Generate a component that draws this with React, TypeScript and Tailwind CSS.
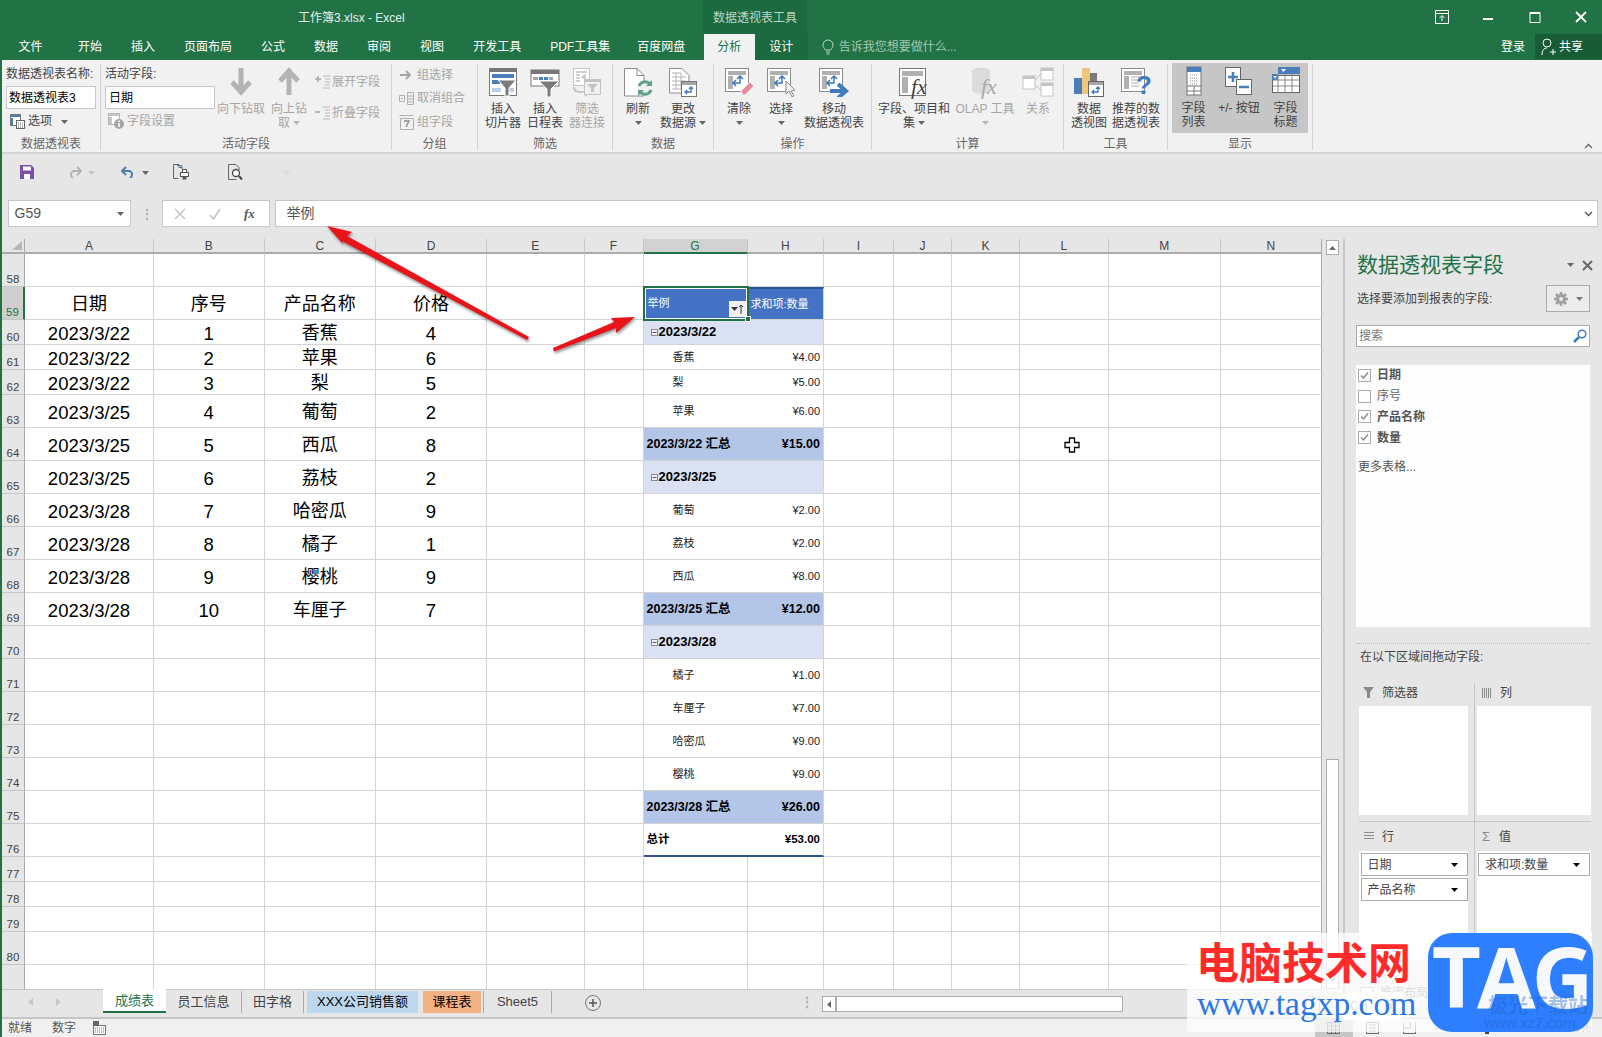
import React from "react";

const Caret = ({ c = "#666" }: { c?: string }) => (
  <svg width="7" height="4" viewBox="0 0 7 4" className="inline-block align-middle">
    <path d="M0 0h7L3.500 4z" fill={c} />
  </svg>
);

const Frame = ({ children, w = 30, h = 30 }: { children: React.ReactNode; w?: number; h?: number }) => (
  <svg width={w} height={h} viewBox={`0 0 ${w} ${h}`} className="block mx-auto">
    {children}
  </svg>
);

const DownIcon = () => (
  <Frame w={24} h={29}>
    <path d="M12 1v24M3 15l9 10 9-10" stroke="#b3b3b3" strokeWidth="5" fill="none" />
  </Frame>
);
const UpIcon = () => (
  <Frame w={24} h={29}>
    <path d="M12 28V4M3 14l9-10 9 10" stroke="#b3b3b3" strokeWidth="5" fill="none" />
  </Frame>
);
const ExpandIcon = ({ minus }: { minus?: boolean }) => (
  <svg width="16" height="14" viewBox="0 0 16 14">
    <path d={minus ? "M0 6h5" : "M0 4h6M3 1v6"} stroke="#a6a6a6" strokeWidth="1.500" />
    <path d="M8 1h7M10 4h5M10 7h5M10 10h5M8 13h7" stroke="#b8b8b8" strokeWidth="1" />
  </svg>
);

const SlicerIcon = () => (
  <Frame w={30} h={30}>
    <rect x="1.500" y="1.500" width="27" height="27" fill="#fff" stroke="#777" />
    <rect x="1" y="1" width="28" height="4" fill="#777" />
    <rect x="4" y="7" width="22" height="4" fill="#4a7eb8" />
    <rect x="4" y="13" width="8" height="4" fill="#4a7eb8" />
    <rect x="4" y="21" width="9" height="4" fill="#bcd0e8" />
    <rect x="20" y="21" width="6" height="4" fill="#bcd0e8" />
    <path d="M10 13h18l-7 8v8h-4v-8z" fill="#7b7b7b" stroke="#fff" strokeWidth="1" />
  </Frame>
);
const TimelineIcon = () => (
  <Frame w={30} h={30}>
    <rect x="1" y="3" width="28" height="16" fill="#fff" stroke="#777" />
    <rect x="1" y="3" width="28" height="4" fill="#777" />
    <rect x="3" y="10" width="5" height="3" fill="#a6a6a6" />
    <rect x="9" y="10" width="4" height="3" fill="#4a7eb8" />
    <rect x="14" y="10" width="4" height="3" fill="#4a7eb8" />
    <rect x="19" y="10" width="4" height="3" fill="#a6a6a6" />
    <path d="M9 14h20l-8 8v8h-4v-8z" fill="#7b7b7b" stroke="#fff" strokeWidth="1" />
  </Frame>
);
const ConnectIcon = () => (
  <Frame w={30} h={30}>
    <rect x="1.500" y="1.500" width="16" height="17" fill="#fff" stroke="#c4c4c4" />
    <path d="M4 5h11M4 8h4M4 11h4M4 14h4" stroke="#cfcfcf" strokeWidth="2" />
    <path d="M10 10l3-2v4zM10 25h6M13 21l4 4-4 4" stroke="#c4c4c4" strokeWidth="1.500" fill="none" />
    <path d="M2 20c0 5 4 5 8 5" stroke="#c4c4c4" strokeWidth="2" fill="none" />
    <rect x="12.500" y="12.500" width="16" height="15" fill="#f1f1f1" stroke="#c4c4c4" />
    <rect x="12" y="12" width="17" height="3" fill="#c4c4c4" />
    <path d="M15 17h11l-4 4v4h-3v-4z" fill="#c4c4c4" />
  </Frame>
);
const RefreshIcon = () => (
  <Frame w={30} h={30}>
    <path d="M1.500 1.500H14l7 7V29H1.500z" fill="#fff" stroke="#8a8a8a" />
    <path d="M14 1.500V8.500H21" fill="none" stroke="#8a8a8a" />
    <circle cx="22" cy="21" r="7.500" fill="#f1f1f1" />
    <path d="M16 19a6.500 6.500 0 0 1 11-2M28 23a6.500 6.500 0 0 1-11 2" stroke="#5fa08a" strokeWidth="3" fill="none" />
    <path d="M29 13v6h-6zM15 29v-6h6z" fill="#5fa08a" />
  </Frame>
);
const ChangeIcon = () => (
  <Frame w={30} h={30}>
    <path d="M1.500 1.500H14l7 7V26H1.500z" fill="#fff" stroke="#8a8a8a" />
    <path d="M4 6h9M4 10h14M4 14h14M4 18h14M4 22h14M8 6v17M13 6v17" stroke="#b5b5b5" strokeWidth="1" />
    <rect x="13.500" y="14.500" width="15" height="15" fill="#fff" stroke="#777" />
    <rect x="14" y="15" width="14" height="3" fill="#a6a6a6" />
    <path d="M23 20v5h-5M19 23l-2 2 2 2M21 22l2-2 2 2" stroke="#3b78bd" strokeWidth="1.300" fill="none" />
  </Frame>
);
const PivotBase = () => (
  <>
    <rect x="1.500" y="1.500" width="23" height="23" fill="#fff" stroke="#8a8a8a" />
    <rect x="4" y="4" width="18" height="4" fill="#b0b0b0" />
    <rect x="4" y="9" width="5" height="13" fill="#b0b0b0" />
    <path d="M16 10v6h-6M12 13l-3 3 3 3M13 12l3-3 3 3" stroke="#3b78bd" strokeWidth="1.500" fill="none" />
  </>
);
const ClearIcon = () => (
  <Frame w={30} h={30}>
    <PivotBase />
    <path d="M17 24l9-9 4 4-9 9h-2z" fill="#e98a9c" stroke="#f1f1f1" />
  </Frame>
);
const SelectIcon = () => (
  <Frame w={30} h={30}>
    <PivotBase />
    <path d="M20 14l0 13 3-3 3 6 2-1-3-5 4-1z" fill="#f1f1f1" stroke="#8a8a8a" />
  </Frame>
);
const MoveIcon = () => (
  <Frame w={32} h={30}>
    <PivotBase />
    <path d="M12 24h12M20 17l8 7-8 7" stroke="#3f7cbf" strokeWidth="4" fill="none" />
  </Frame>
);
const FxIcon = () => (
  <Frame w={32} h={32}>
    <rect x="1.500" y="1.500" width="26" height="27" fill="#fff" stroke="#777" />
    <rect x="4" y="4" width="21" height="5" fill="#b0b0b0" />
    <rect x="4" y="10" width="6" height="16" fill="#b0b0b0" />
    <text x="13" y="27" fontFamily="'Liberation Serif',serif" fontStyle="italic" fontSize="22" fill="#444">fx</text>
  </Frame>
);
const OlapIcon = () => (
  <Frame w={32} h={32}>
    <ellipse cx="12" cy="5" rx="9" ry="3.500" fill="#dcdcdc" stroke="#cfcfcf" />
    <path d="M3 5v18c0 5 18 5 18 0V5z" fill="#dcdcdc" />
    <text x="12" y="27" fontFamily="'Liberation Serif',serif" fontStyle="italic" fontSize="22" fill="#a8a8a8">fx</text>
  </Frame>
);
const RelIcon = () => (
  <Frame w={32} h={30}>
    <rect x="1" y="9" width="12" height="13" fill="#fff" stroke="#c4c4c4" />
    <rect x="19" y="1" width="12" height="12" fill="#fff" stroke="#c4c4c4" />
    <rect x="19" y="16" width="12" height="13" fill="#fff" stroke="#c4c4c4" />
    <path d="M1 9h12v3H1zM19 1h12v3H19zM19 16h12v3H19z" fill="#c4c4c4" />
    <path d="M13 13l6-6M13 18l6 5" stroke="#c4c4c4" />
  </Frame>
);
const ChartIcon = () => (
  <Frame w={32} h={32}>
    <rect x="1" y="11" width="9" height="16" fill="#4a7eb8" />
    <rect x="9" y="1" width="8" height="26" fill="#eec77c" />
    <rect x="17" y="6" width="7" height="8" fill="#7a7a7a" />
    <rect x="15.500" y="14.500" width="15" height="15" fill="#fff" stroke="#666" />
    <rect x="16" y="15" width="14" height="3" fill="#a6a6a6" />
    <path d="M25 20v5h-5M21 23l-2 2 2 2M23 22l2-2 2 2" stroke="#3b78bd" strokeWidth="1.300" fill="none" />
  </Frame>
);
const RecommendIcon = () => (
  <Frame w={32} h={32}>
    <rect x="1.500" y="1.500" width="23" height="23" fill="#fff" stroke="#8a8a8a" />
    <rect x="4" y="4" width="18" height="4" fill="#b0b0b0" />
    <rect x="4" y="9" width="5" height="13" fill="#b0b0b0" />
    <path d="M11 10h10M11 13h10M11 16h8M11 19h8" stroke="#b0b0b0" />
    <text x="16" y="27" fontFamily="'Liberation Sans',sans-serif" fontWeight="700" fontSize="26" fill="#3f7cbf">?</text>
  </Frame>
);
const FieldListIcon = () => (
  <Frame w={16} h={30}>
    <rect x="1" y="1" width="14" height="28" fill="#fff" stroke="#777" />
    <rect x="1" y="1" width="14" height="5" fill="#4a7eb8" />
    <path d="M4 9h8M4 12h8M4 15h8M4 18h8" stroke="#888" strokeDasharray="1 1" />
    <path d="M1 20h14M1 25h14M8 20v9" stroke="#777" />
  </Frame>
);
const PlusMinusIcon = () => (
  <Frame w={30} h={30}>
    <rect x="1.500" y="1.500" width="15" height="19" fill="#fff" stroke="#666" />
    <path d="M4 11h10M9 6v10" stroke="#4a7eb8" strokeWidth="2.500" />
    <rect x="12.500" y="13.500" width="15" height="15" fill="#fff" stroke="#666" />
    <path d="M15 21h10" stroke="#4a7eb8" strokeWidth="2.500" />
  </Frame>
);
const HeadersIcon = () => (
  <Frame w={30} h={28}>
    <rect x="1.500" y="9.500" width="27" height="17" fill="#fff" stroke="#666" />
    <rect x="7" y="1" width="22" height="7" fill="#4a7eb8" />
    <rect x="1" y="8" width="6" height="6" fill="#4a7eb8" />
    <path d="M2 14h26M2 20h26M7 8v19M14 8v19M21 8v19" stroke="#888" />
    <path d="M10 3h5l-2.500 3zM2 10h4l-2 2.500z" fill="#fff" />
  </Frame>
);

const Btn = ({
  w,
  icon,
  lines,
  caret,
  dis,
}: {
  w: string;
  icon: React.ReactNode;
  lines: string[];
  caret?: boolean;
  dis?: boolean;
}) => (
  <div className={`${w} flex flex-col items-center shrink-0 ${dis ? "text-[#a6a6a6]" : "text-[#444]"}`}>
    <div className="h-[37px] pt-[2px] flex items-start justify-center">{icon}</div>
    {lines.map((l, i) => (
      <div key={i} className="h-[14px] leading-[14px] whitespace-nowrap text-[12px] flex items-center gap-[3px]">
        {l && <span>{l}</span>}
        {caret && i === lines.length - 1 && <Caret c={dis ? "#b5b5b5" : "#666"} />}
      </div>
    ))}
  </div>
);

const Group = ({ w, label, children, cls = "" }: { w: string; label: string; children: React.ReactNode; cls?: string }) => (
  <div className={`${w} h-[86px] mt-[4px] border-r border-[#d2d2d2] flex flex-col shrink-0`}>
    <div className={`h-[72px] mt-[1px] flex ${cls}`}>{children}</div>
    <div className="h-[13px] leading-[15px] text-[12px] text-[#666] text-center">{label}</div>
  </div>
);

const colNames = ["A", "B", "C", "D", "E", "F", "G", "H", "I", "J", "K", "L", "M", "N"];
const rowNums = Array.from({ length: 24 }, (_, i) => 58 + i);

const table: Record<number, string[]> = {
  59: ["日期", "序号", "产品名称", "价格"],
  60: ["2023/3/22", "1", "香蕉", "4"],
  61: ["2023/3/22", "2", "苹果", "6"],
  62: ["2023/3/22", "3", "梨", "5"],
  63: ["2023/3/25", "4", "葡萄", "2"],
  64: ["2023/3/25", "5", "西瓜", "8"],
  65: ["2023/3/25", "6", "荔枝", "2"],
  66: ["2023/3/28", "7", "哈密瓜", "9"],
  67: ["2023/3/28", "8", "橘子", "1"],
  68: ["2023/3/28", "9", "樱桃", "9"],
  69: ["2023/3/28", "10", "车厘子", "7"],
};

type P = { t: "date" | "item" | "sub" | "total"; a: string; b?: string };
const pivot: Record<number, P> = {
  60: { t: "date", a: "2023/3/22" },
  61: { t: "item", a: "香蕉", b: "¥4.00" },
  62: { t: "item", a: "梨", b: "¥5.00" },
  63: { t: "item", a: "苹果", b: "¥6.00" },
  64: { t: "sub", a: "2023/3/22 汇总", b: "¥15.00" },
  65: { t: "date", a: "2023/3/25" },
  66: { t: "item", a: "葡萄", b: "¥2.00" },
  67: { t: "item", a: "荔枝", b: "¥2.00" },
  68: { t: "item", a: "西瓜", b: "¥8.00" },
  69: { t: "sub", a: "2023/3/25 汇总", b: "¥12.00" },
  70: { t: "date", a: "2023/3/28" },
  71: { t: "item", a: "橘子", b: "¥1.00" },
  72: { t: "item", a: "车厘子", b: "¥7.00" },
  73: { t: "item", a: "哈密瓜", b: "¥9.00" },
  74: { t: "item", a: "樱桃", b: "¥9.00" },
  75: { t: "sub", a: "2023/3/28 汇总", b: "¥26.00" },
  76: { t: "total", a: "总计", b: "¥53.00" },
};

const CELL = "border-r border-b border-[#d4d4d4]";

function PivotCell({ r, c }: { r: number; c: number }) {
  if (r === 59) {
    if (c === 6)
      return (
        <div className="relative bg-[#4472c4] border-b border-[#d4d4d4] flex items-center pl-[4px] text-[11px] text-white">
          举例
          <div className="absolute left-[-1px] top-[-1px] right-[-1px] bottom-[-1.500px] border-[2px] border-[#217346] outline outline-1 -outline-offset-3 outline-white" />
          <div className="absolute right-[2px] bottom-[2px] w-[17px] h-[16px] bg-[#f0f0f0] flex items-center justify-center gap-[1px]">
            <Caret c="#333" />
            <svg width="4" height="10" viewBox="0 0 4 10">
              <path d="M2 10V1M0 3l2-2 2 2" stroke="#333" fill="none" />
            </svg>
          </div>
          <div className="absolute right-[-3px] bottom-[-3px] w-[6px] h-[6px] bg-[#217346] border border-white z-10" />
        </div>
      );
    return (
      <div className={`${CELL} bg-[#4472c4] border-t-2 border-t-[#2f5597] flex items-center pl-[3px] text-[11px] text-white whitespace-nowrap`}>
        求和项:数量
      </div>
    );
  }
  const p = pivot[r];
  const isG = c === 6;
  if (p.t === "date")
    return (
      <div className={`bg-[#d9e1f2] border-b border-[#d4d4d4] flex items-center ${isG ? "pl-[7px]" : "border-r"} font-bold text-[13px] text-black`}>
        {isG && (
          <>
            <svg width="7" height="7" viewBox="0 0 7 7" className="mr-[1px] shrink-0">
              <rect x=".500" y=".500" width="6" height="6" fill="#eef1f8" stroke="#8a8a8a" />
              <path d="M1.500 3.500h4" stroke="#555" />
            </svg>
            {p.a}
          </>
        )}
      </div>
    );
  if (p.t === "sub")
    return (
      <div className={`bg-[#b4c6e7] border-b border-[#d4d4d4] flex items-center ${isG ? "pl-[3px]" : "border-r justify-end pr-[3px]"} font-bold text-[12.500px] text-black whitespace-nowrap`}>
        {isG ? p.a : p.b}
      </div>
    );
  if (p.t === "total")
    return (
      <div className={`bg-white border-b-2 border-b-[#2f5597] flex items-center ${isG ? "pl-[3px]" : "border-r border-r-[#d4d4d4] justify-end pr-[3px]"} font-bold text-[11.500px] text-black`}>
        {isG ? p.a : p.b}
      </div>
    );
  return (
    <div className={`bg-white border-b border-[#d4d4d4] flex items-center ${isG ? "pl-[29px]" : "border-r justify-end pr-[3px]"} text-[11px] text-[#222]`}>
      {isG ? p.a : p.b}
    </div>
  );
}

function Sheet() {
  return (
    <div className="w-[1319.500px] h-[750px] bg-white grid grid-cols-[23px_129px_110.500px_111.500px_111px_97.500px_59px_104px_76.500px_70px_58px_68px_88.500px_112.500px_100.500px] grid-rows-[15px_33px_33px_25px_25px_25px_repeat(14,33px)_25px_25px_25px_33px_37px] overflow-hidden">
      <div className="bg-[#e6e6e6] border-r border-b-2 border-[#ababab] relative">
        <svg width="10" height="9" viewBox="0 0 10 9" className="absolute right-[2px] bottom-[2px]">
          <path d="M10 0v9H0z" fill="#b5b5b5" />
        </svg>
      </div>
      {colNames.map((n, i) => (
        <div
          key={n}
          className={`border-r border-[#c6c6c6] flex items-center justify-center text-[12px] ${
            n === "G" ? "bg-[#d2d2d2] text-[#217346] border-b-2 border-b-[#217346]" : "bg-[#e6e6e6] text-[#444] border-b-2 border-b-[#ababab]"
          } ${i === 13 ? "border-r-[#ababab]" : ""}`}
        >
          {n}
        </div>
      ))}
      {rowNums.map((r) => (
        <React.Fragment key={r}>
          <div
            className={`border-b border-[#c6c6c6] flex items-end justify-center text-[11.500px] leading-[14px] ${
              r === 59 ? "bg-[#cfcfcf] text-[#217346] border-r-2 border-r-[#217346]" : "bg-[#e6e6e6] text-[#444] border-r border-r-[#ababab]"
            }`}
          >
            {r}
          </div>
          {colNames.map((_, c) => {
            if ((c === 6 || c === 7) && (r === 59 || pivot[r])) return <PivotCell key={c} r={r} c={c} />;
            const v = c < 4 && table[r] ? table[r][c] : "";
            const isNum = /^[0-9]/.test(v);
            return (
              <div
                key={c}
                className={`${CELL} ${c === 13 ? "border-r-[#ababab]" : ""} flex items-center justify-center pt-[3px] text-black ${
                  isNum ? "text-[18.500px]" : "text-[18px]"
                } whitespace-nowrap overflow-hidden`}
              >
                {v}
              </div>
            );
          })}
        </React.Fragment>
      ))}
    </div>
  );
}

const SheetTab = ({ cls, children }: { cls: string; children: React.ReactNode }) => (
  <div className={`${cls} h-[22px] mt-[1px] flex items-center justify-center text-[13px] whitespace-nowrap shrink-0`}>{children}</div>
);

const Check = ({ on }: { on: boolean }) => (
  <svg width="13" height="13" viewBox="0 0 13 13" className="shrink-0">
    <rect x=".500" y=".500" width="12" height="12" fill="#fff" stroke="#ababab" />
    {on && <path d="M3 6.500l2.500 2.500L10 3.500" stroke="#8a8a8a" strokeWidth="1.500" fill="none" />}
  </svg>
);

const Pill = ({ w, label, cls = "" }: { w: string; label: string; cls?: string }) => (
  <div className={`${w} h-[23px] border border-[#ababab] bg-white flex items-center justify-between pl-[6px] pr-[9px] text-[12px] text-[#444] ${cls}`}>
    <span>{label}</span>
    <Caret c="#000" />
  </div>
);

function Panel() {
  const fields: [string, boolean][] = [
    ["日期", true],
    ["序号", false],
    ["产品名称", true],
    ["数量", true],
  ];
  return (
    <div className="ml-[3px] w-[259px] h-[778px] border-l-2 border-[#c6c6c6] pl-[11px] text-[#444] text-[12px] flex flex-col relative">
      <div className="mt-[12px] h-[28px] flex items-center justify-between pr-[9px] pl-[1px]">
        <span className="text-[21px] leading-[28px] text-[#217346] whitespace-nowrap">数据透视表字段</span>
        <span className="flex items-center gap-[8px]">
          <Caret c="#666" />
          <svg width="11" height="11" viewBox="0 0 11 11">
            <path d="M1 1l9 9M10 1l-9 9" stroke="#666" strokeWidth="2" />
          </svg>
        </span>
      </div>
      <div className="mt-[6px] h-[27px] w-[234px] flex items-center justify-between pl-[1px]">
        <span>选择要添加到报表的字段:</span>
        <div className="w-[44px] h-[27px] border border-[#ababab] bg-[#ececec] flex items-center justify-center gap-[8px]">
          <svg width="14" height="14" viewBox="0 0 14 14">
            <circle cx="7" cy="7" r="3.500" fill="none" stroke="#a0a0a0" strokeWidth="3" />
            <path d="M7 0v3M7 11v3M0 7h3M11 7h3M2 2l2 2M10 10l2 2M12 2l-2 2M4 10l-2 2" stroke="#a0a0a0" strokeWidth="2.500" />
          </svg>
          <Caret c="#777" />
        </div>
      </div>
      <div className="mt-[13px] h-[22px] w-[234px] border border-[#ababab] bg-white flex items-center justify-between px-[2px] text-[12px] text-[#777]">
        <span>搜索</span>
        <svg width="14" height="14" viewBox="0 0 14 14">
          <circle cx="9" cy="5" r="3.800" fill="none" stroke="#3f7cbf" strokeWidth="1.500" />
          <path d="M6 8l-5 5" stroke="#3f7cbf" strokeWidth="2.500" />
        </svg>
      </div>
      <div className="mt-[18px] h-[262px] w-[234px] bg-[#fdfdfd] pl-[2px]">
        {fields.map(([f, on]) => (
          <div key={f} className="h-[20.800px] flex items-center gap-[6px]">
            <Check on={on} />
            <span className={on ? "font-bold text-[#555]" : "text-[#666]"}>{f}</span>
          </div>
        ))}
        <div className="mt-[9px] leading-[20px] text-[#555]">更多表格...</div>
      </div>
      <div className="mt-[16px] w-[234px] border-t border-dotted border-[#b5b5b5]" />
      <div className="mt-[4px] h-[18px] leading-[18px] pl-[4px]">在以下区域间拖动字段:</div>
      <div className="mt-[17px] ml-[3px] w-[232px] grid grid-cols-[116px_116px] grid-rows-[139px_139px]">
        <div className="border-r border-b border-[#c6c6c6] pr-[6px]">
          <div className="h-[23px] pb-[4px] flex items-center gap-[8px] pl-[4px]">
            <svg width="11" height="11" viewBox="0 0 11 11">
              <path d="M0 0h11L7 5v6H4V5z" fill="#8a8a8a" />
            </svg>
            <span>筛选器</span>
          </div>
          <div className="h-[109px] bg-white" />
        </div>
        <div className="border-b border-[#c6c6c6] pl-[2px]">
          <div className="h-[23px] pb-[4px] flex items-center gap-[9px] pl-[5px]">
            <svg width="9" height="10" viewBox="0 0 9 10">
              <path d="M.5 0v10M2.500 0v10M4.500 0v10M6.500 0v10M8.500 0v10" stroke="#8a8a8a" />
            </svg>
            <span>列</span>
          </div>
          <div className="h-[109px] bg-white" />
        </div>
        <div className="border-r border-[#c6c6c6] pr-[6px]">
          <div className="h-[29px] flex items-center gap-[8px] pl-[5px]">
            <svg width="10" height="9" viewBox="0 0 10 9">
              <path d="M0 .5h10M0 3.500h10M0 6.500h10" stroke="#8a8a8a" />
            </svg>
            <span>行</span>
          </div>
          <div className="h-[109px] bg-white pl-[1.500px] pt-[2px]">
            <Pill w="w-[107px]" label="日期" />
            <Pill w="w-[107px]" label="产品名称" cls="mt-[2px]" />
          </div>
        </div>
        <div className="pl-[2px]">
          <div className="h-[29px] flex items-center gap-[9px] pl-[5px]">
            <span className="text-[#8a8a8a] text-[13px] leading-none">Σ</span>
            <span>值</span>
          </div>
          <div className="h-[109px] bg-white pl-[1px] pt-[2px]">
            <Pill w="w-[112px]" label="求和项:数量" />
          </div>
        </div>
      </div>
      <div className="mt-[23px] ml-[4px] flex items-center gap-[7px] text-[#777]">
        <Check on={false} />
        <span>推迟布局更新</span>
      </div>
    </div>
  );
}

export default function App() {
  return (
    <div className="relative w-[1602px] h-[1037px] overflow-hidden bg-[#217346] pl-[2px] font-['Liberation_Sans','Noto_Sans_CJK_SC',sans-serif]">
      <div className="w-[1600px] h-[1037px] flex flex-col">
        {/* title bar */}
        <div className="h-[34px] bg-[#217346] flex text-white text-[12px]">
          <div className="w-[701px] pl-[296px] flex items-center pt-[2px] text-[#e8f1ec]">工作簿3.xlsx - Excel</div>
          <div className="w-[104px] bg-[#1c6a40] flex items-center justify-center pt-[2px] text-[#bcd6c6]">数据透视表工具</div>
          <div className="ml-auto flex items-center gap-[32.500px] pr-[14px]">
            <svg width="14" height="14" viewBox="0 0 14 14">
              <path d="M.5.5h13v13H.5zM.5 3.500h13M7 11V6M4.500 8L7 5.500 9.500 8" stroke="#fff" fill="none" />
            </svg>
            <svg width="14" height="14" viewBox="0 0 14 14">
              <path d="M2 9h10" stroke="#fff" strokeWidth="2" />
            </svg>
            <svg width="14" height="14" viewBox="0 0 14 14">
              <path d="M2 2.500h10v10H2z" stroke="#fff" fill="none" />
              <path d="M2 3h10" stroke="#fff" strokeWidth="2" />
            </svg>
            <svg width="14" height="14" viewBox="0 0 14 14">
              <path d="M2 2l10 10M12 2L2 12" stroke="#fff" strokeWidth="1.800" />
            </svg>
          </div>
        </div>
        {/* tabs */}
        <div className="h-[26px] bg-[#217346] flex items-stretch text-[12px] text-white">
          <div className="flex items-center pl-[16.500px] pr-[21px]">文件</div>
          <div className="flex items-center px-[14.500px]">开始</div>
          <div className="flex items-center px-[14.500px]">插入</div>
          <div className="flex items-center px-[14.500px]">页面布局</div>
          <div className="flex items-center px-[14.500px]">公式</div>
          <div className="flex items-center px-[14.500px]">数据</div>
          <div className="flex items-center px-[14.500px]">审阅</div>
          <div className="flex items-center px-[14.500px]">视图</div>
          <div className="flex items-center px-[14.500px]">开发工具</div>
          <div className="flex items-center px-[14.500px] whitespace-nowrap">PDF工具集</div>
          <div className="flex items-center pl-[12.500px] pr-[18.500px]">百度网盘</div>
          <div className="w-[51px] bg-[#f1f1f1] text-[#217346] flex items-center justify-center">分析</div>
          <div className="w-[53px] bg-[#1c6a40] flex items-center justify-center">设计</div>
          <div className="ml-[14px] flex items-center gap-[5px] text-[#a3c8b2]">
            <svg width="12" height="16" viewBox="0 0 12 16">
              <path d="M3.500 11C2 9 1 8 1 6a5 5 0 0 1 10 0c0 2-1 3-2.500 5zM4 13h4M4.500 15h3" stroke="#bcd6c6" fill="none" />
            </svg>
            <span>告诉我您想要做什么...</span>
          </div>
          <div className="ml-auto flex items-center pr-[10px]">登录</div>
          <div className="w-[67px] h-[25px] bg-[#185c37] flex items-center pl-[6px] gap-[3px]">
            <svg width="15" height="18" viewBox="0 0 15 18">
              <circle cx="6" cy="5" r="4" stroke="#fff" fill="none" />
              <path d="M1 17c0-5 2-7 5-7M9 14h6M12 11v6" stroke="#fff" fill="none" />
            </svg>
            <span>共享</span>
          </div>
        </div>
        {/* ribbon */}
        <div className="h-[94px] bg-[#f1f1f1] border-b-2 border-[#d4d4d4] flex relative">
          <Group w="w-[99px]" label="数据透视表" cls="flex-col pl-[4px] text-[12px] text-[#444]">
            <div className="h-[18px] leading-[18px] whitespace-nowrap">数据透视表名称:</div>
            <div className="mt-[3px] w-[90px] h-[23px] border border-[#c6c6c6] bg-white text-black flex items-center pl-[2px]">数据透视表3</div>
            <div className="mt-[4px] h-[16px] flex items-center pl-[4px]">
              <svg width="15" height="15" viewBox="0 0 15 15">
                <rect x=".500" y=".500" width="10" height="11" fill="#fff" stroke="#777" />
                <path d="M1 1h9v2H1zM1 4h2v7H1z" fill="#4a7eb8" />
                <rect x="6.500" y="6.500" width="8" height="8" fill="#fff" stroke="#666" />
                <path d="M8 9h5M8 11h5M8 13h5" stroke="#777" strokeDasharray="1 1" />
              </svg>
              <span className="ml-[3px]">选项</span>
              <span className="ml-[9px]">
                <Caret />
              </span>
            </div>
          </Group>
          <Group w="w-[291px]" label="活动字段" cls="pl-[4px] text-[12px]">
            <div className="w-[110px] flex flex-col shrink-0 text-[#444]">
              <div className="h-[18px] leading-[18px]">活动字段:</div>
              <div className="mt-[3px] h-[23px] border border-[#c6c6c6] bg-white text-black flex items-center pl-[3px]">日期</div>
              <div className="mt-[4px] h-[16px] flex items-center pl-[3px] text-[#a6a6a6] gap-[3px]">
                <svg width="16" height="16" viewBox="0 0 16 16">
                  <rect x=".500" y=".500" width="11" height="11" fill="#fff" stroke="#b5b5b5" />
                  <path d="M1 1h10v2H1zM1 4h3v7H1z" fill="#c6c6c6" />
                  <circle cx="11" cy="11" r="5" fill="#a6a6a6" />
                  <path d="M11 10v4M11 7.500v1.500" stroke="#fff" strokeWidth="1.500" />
                </svg>
                <span>字段设置</span>
              </div>
            </div>
            <div className="ml-[1px]">
              <Btn w="w-[50px]" icon={<DownIcon />} lines={["向下钻取"]} dis />
            </div>
            <Btn w="w-[46px]" icon={<UpIcon />} lines={["向上钻", "取"]} caret dis />
            <div className="flex flex-col text-[#a6a6a6] whitespace-nowrap pl-[3px]">
              <div className="mt-[8px] h-[18px] flex items-center gap-[1px]">
                <ExpandIcon />
                <span>展开字段</span>
              </div>
              <div className="mt-[13px] h-[18px] flex items-center gap-[1px]">
                <ExpandIcon minus />
                <span>折叠字段</span>
              </div>
            </div>
          </Group>
          <Group w="w-[86px]" label="分组" cls="flex-col pl-[7px] text-[12px] text-[#a6a6a6]">
            <div className="h-[20px] flex items-center gap-[4px]">
              <svg width="14" height="14" viewBox="0 0 14 14">
                <path d="M1 7h10M7 3l4 4-4 4" stroke="#a6a6a6" strokeWidth="2" fill="none" />
              </svg>
              组选择
            </div>
            <div className="mt-[3px] h-[20px] flex items-center gap-[3px]">
              <svg width="15" height="15" viewBox="0 0 15 15">
                <path d="M.5 4.500h5v6h-5zM8.500 1.500h6v12h-6zM8.500 5h6M8.500 8h6M8.500 11h6M2 7.500l2 0" stroke="#b0b0b0" fill="none" />
              </svg>
              取消组合
            </div>
            <div className="mt-[4px] h-[20px] flex items-center gap-[3px]">
              <svg width="15" height="15" viewBox="0 0 15 15">
                <path d="M.5.5h14M1.500 3.500h13v11h-13z" stroke="#b0b0b0" fill="none" />
                <path d="M5 6h5L7 12" stroke="#8a8a8a" fill="none" strokeWidth="1.300" />
              </svg>
              组字段
            </div>
          </Group>
          <Group w="w-[135px]" label="筛选" cls="pl-[4px]">
            <Btn w="w-[42px]" icon={<SlicerIcon />} lines={["插入", "切片器"]} />
            <Btn w="w-[42px]" icon={<TimelineIcon />} lines={["插入", "日程表"]} />
            <Btn w="w-[42px]" icon={<ConnectIcon />} lines={["筛选", "器连接"]} dis />
          </Group>
          <Group w="w-[101px]" label="数据" cls="pl-[2px]">
            <Btn w="w-[46px]" icon={<RefreshIcon />} lines={["刷新", ""]} caret />
            <Btn w="w-[44px]" icon={<ChangeIcon />} lines={["更改", "数据源"]} caret />
          </Group>
          <Group w="w-[158px]" label="操作" cls="pl-[4px]">
            <Btn w="w-[42px]" icon={<ClearIcon />} lines={["清除", ""]} caret />
            <Btn w="w-[42px]" icon={<SelectIcon />} lines={["选择", ""]} caret />
            <Btn w="w-[64px]" icon={<MoveIcon />} lines={["移动", "数据透视表"]} />
          </Group>
          <Group w="w-[192px]" label="计算" cls="pl-[2px]">
            <Btn w="w-[80px]" icon={<FxIcon />} lines={["字段、项目和", "集"]} caret />
            <Btn w="w-[62px]" icon={<OlapIcon />} lines={["OLAP 工具", ""]} caret dis />
            <Btn w="w-[44px]" icon={<RelIcon />} lines={["关系"]} dis />
          </Group>
          <Group w="w-[104px]" label="工具" cls="pl-[2px]">
            <Btn w="w-[46px]" icon={<ChartIcon />} lines={["数据", "透视图"]} />
            <Btn w="w-[48px]" icon={<RecommendIcon />} lines={["推荐的数", "据透视表"]} />
          </Group>
          <Group w="w-[145px]" label="显示" cls="pl-[4px]">
            <div className="mt-[-2px] h-[70px] pt-[1px] w-[136px] bg-[#c6c6c6] flex">
              <Btn w="w-[43px]" icon={<FieldListIcon />} lines={["字段", "列表"]} />
              <Btn w="w-[48px]" icon={<PlusMinusIcon />} lines={["+/- 按钮"]} />
              <Btn w="w-[45px]" icon={<HeadersIcon />} lines={["字段", "标题"]} />
            </div>
          </Group>
          <svg width="9" height="6" viewBox="0 0 9 6" className="absolute right-[9px] bottom-[3px]">
            <path d="M1 5l3.500-3.500L8 5" stroke="#666" strokeWidth="1.300" fill="none" />
          </svg>
        </div>
        {/* quick access */}
        <div className="h-[36px] bg-[#e6e6e6] flex items-center pl-[18px] shrink-0">
          <svg width="14" height="14" viewBox="0 0 14 14">
            <path d="M0 0h11l3 3v11H0z" fill="#7d4fa8" />
            <path d="M3 1.500h8v4H3z" fill="#fff" />
            <path d="M4 9h6v5H4z" fill="#fff" />
          </svg>
          <svg width="15" height="12" viewBox="0 0 15 12" className="ml-[33px]">
            <path d="M13 5H6a4 4 0 0 0 0 7M10 1l4 4-4 4" stroke="#b5b5b5" strokeWidth="2" fill="none" />
          </svg>
          <span className="ml-[6px]"><Caret c="#c6c6c6" /></span>
          <svg width="15" height="12" viewBox="0 0 15 12" className="ml-[26px]">
            <path d="M2 5h7a4 4 0 0 1 0 7M5 1L1 5l4 4" stroke="#4a7eb8" strokeWidth="2" fill="none" />
          </svg>
          <span className="ml-[6px]"><Caret c="#666" /></span>
          <svg width="16" height="16" viewBox="0 0 16 16" className="ml-[24px]">
            <path d="M.5.5H6v3h3M.5.5v14h5" stroke="#666" fill="none" />
            <path d="M4 1.500h5V5" stroke="#4a7eb8" fill="none" />
            <rect x="7.500" y="8.500" width="8" height="4" fill="#fff" stroke="#555" />
            <rect x="9.500" y="5.500" width="4" height="3" fill="#fff" stroke="#555" />
            <rect x="9.500" y="12.500" width="4" height="3" fill="#555" />
          </svg>
          <svg width="15" height="16" viewBox="0 0 15 16" className="ml-[39px]">
            <path d="M.5.5H8l3 3V6M.5.5v15h8" stroke="#666" fill="none" />
            <circle cx="8" cy="9" r="3.500" stroke="#444" fill="#fff" strokeWidth="1.300" />
            <path d="M11 12l3 3.500" stroke="#444" strokeWidth="2" />
          </svg>
          <span className="ml-[40px]"><Caret c="#d8d8d8" /></span>
        </div>
        {/* formula bar */}
        <div className="h-[49px] bg-[#e6e6e6] pt-[10px] flex items-start shrink-0">
          <div className="ml-[5.500px] w-[123.500px] h-[27px] bg-white border border-[#c6c6c6] flex items-center justify-between pl-[6px] pr-[6px] text-[14px] text-[#555]">
            <span>G59</span>
            <Caret c="#666" />
          </div>
          <div className="w-[31px] h-[27px] flex items-center justify-center text-[#aaa] text-[12px] font-bold">⋮</div>
          <div className="w-[108px] h-[27px] bg-white border border-[#c6c6c6] flex items-center pl-[11px] gap-[23px]">
            <svg width="12" height="12" viewBox="0 0 12 12">
              <path d="M1 1l10 10M11 1L1 11" stroke="#c0c0c0" strokeWidth="1.300" />
            </svg>
            <svg width="12" height="12" viewBox="0 0 12 12">
              <path d="M1 7l3.500 4L11 1" stroke="#c0c0c0" strokeWidth="1.500" fill="none" />
            </svg>
            <span className="font-['Liberation_Serif',serif] italic font-bold text-[13px] text-[#555]">fx</span>
          </div>
          <div className="ml-[4.500px] w-[1323.500px] h-[27px] bg-white border border-[#c6c6c6] flex items-center justify-between pl-[11px] pr-[4px] text-[14px] text-[#555]">
            <span>举例</span>
            <svg width="9" height="6" viewBox="0 0 9 6">
              <path d="M1 1l3.500 3.500L8 1" stroke="#555" strokeWidth="1.300" fill="none" />
            </svg>
          </div>
        </div>
        {/* main */}
        <div className="h-[778px] flex bg-[#e6e6e6] shrink-0">
          <div className="w-[1338px] flex flex-col shrink-0">
            <div className="flex h-[750px]">
              <Sheet />
              <div className="flex-1 flex flex-col pl-[4px] pr-[1px] pt-[1px]">
                <div className="h-[15px] bg-white border border-[#ababab] flex items-center justify-center">
                  <svg width="7" height="4" viewBox="0 0 7 4"><path d="M3.500 0L7 4H0z" fill="#666" /></svg>
                </div>
                <div className="mt-[504px] h-[211px] bg-white border border-[#ababab]" />
                <div className="mt-[1px] h-[18px] bg-white border border-[#ababab] flex items-center justify-center">
                  <Caret c="#999" />
                </div>
              </div>
            </div>
            <div className="h-[28px] w-[1320px] border-t border-[#c6c6c6] flex items-start text-[#444] relative">
              <div className="w-[101px] h-[24px] flex items-center pl-[26px] gap-[23px] shrink-0">
                <svg width="5" height="8" viewBox="0 0 5 8"><path d="M5 0v8L0 4z" fill="#c6c6c6" /></svg>
                <svg width="5" height="8" viewBox="0 0 5 8"><path d="M0 0v8l5-4z" fill="#c6c6c6" /></svg>
              </div>
              <div className="w-[63px] h-[24px] pt-[1px] bg-white border-b-2 border-[#217346] text-[#217346] flex items-center justify-center text-[13px] shrink-0 mt-[-1px]">成绩表</div>
              <SheetTab cls="w-[76px] border-r border-[#ababab]">员工信息</SheetTab>
              <SheetTab cls="w-[62px] border-r border-[#ababab]">田字格</SheetTab>
              <SheetTab cls="ml-[3px] w-[111px] bg-[#bdd7ee] text-black">XXX公司销售额</SheetTab>
              <SheetTab cls="ml-[5px] w-[58px] bg-[#f4b183] text-black">课程表</SheetTab>
              <SheetTab cls="ml-[2px] w-[1px] bg-[#ababab]">{""}</SheetTab>
              <SheetTab cls="w-[68px] border-r border-[#ababab]">Sheet5</SheetTab>
              <div className="ml-[33px] mt-[5px] w-[16px] h-[16px] rounded-full border border-[#777] flex items-center justify-center shrink-0">
                <svg width="10" height="10" viewBox="0 0 10 10"><path d="M5 1v8M1 5h8" stroke="#555" strokeWidth="1.500" /></svg>
              </div>
              <div className="ml-[200px] w-[14px] h-[24px] flex items-center text-[#aaa] text-[12px] font-bold shrink-0">⋮</div>
              <div className="ml-[7px] mt-[6px] w-[14px] h-[16px] bg-white border border-[#ababab] flex items-center justify-center shrink-0">
                <svg width="4" height="7" viewBox="0 0 4 7"><path d="M4 0v7L0 3.500z" fill="#666" /></svg>
              </div>
              <div className="mt-[6px] w-[287px] h-[16px] bg-white border border-[#ababab] shrink-0" />
              <div className="ml-[183px] mt-[6px] w-[14px] h-[20px] bg-white border border-[#ababab] flex items-center justify-center shrink-0">
                <svg width="4" height="7" viewBox="0 0 4 7"><path d="M0 0v7l4-3.500z" fill="#666" /></svg>
              </div>
            </div>
          </div>
          <Panel />
        </div>
        {/* status */}
        <div className="h-[20px] bg-[#f0f0f0] border-t-2 border-[#c6c6c6] flex items-center text-[12px] text-[#555] shrink-0">
          <span className="ml-[6px]">就绪</span>
          <span className="ml-[20px]">数字</span>
          <svg width="13" height="14" viewBox="0 0 13 14" className="ml-[17px]">
            <rect x=".500" y="4.500" width="12" height="9" fill="#fff" stroke="#777" />
            <rect x="0" y="0" width="6" height="5" fill="#666" />
            <path d="M2 7h9M2 9h9M2 11h9" stroke="#777" strokeDasharray="1 1" />
          </svg>
          <div className="ml-auto flex items-center h-full pr-[11px]">
            <div className="w-[38px] h-full bg-[#c6c6c6] flex items-center justify-center">
              <svg width="13" height="12" viewBox="0 0 13 12"><path d="M.5.5h12v11H.5zM.5 4h12M.5 8h12M4.500.5v11M8.500.5v11" stroke="#666" fill="none" /></svg>
            </div>
            <svg width="13" height="12" viewBox="0 0 13 12" className="ml-[13px]"><path d="M.5.5h12v11H.5zM3 3h7M3 6h7M3 9h7" stroke="#666" fill="none" /></svg>
            <svg width="13" height="12" viewBox="0 0 13 12" className="ml-[24px]"><path d="M.5 11.500h12M.5.500v11M12.500.500v11M.5 6h7V.500" stroke="#666" fill="none" /></svg>
            <span className="ml-[19px] text-[#666]">-</span>
            <div className="ml-[8px] w-[95px] h-[1px] bg-[#999] relative">
              <div className="absolute left-[38px] top-[-5px] w-[4px] h-[11px] bg-[#444]" />
            </div>
            <span className="ml-[5px] text-[#444]">+</span>
            <span className="ml-[13px]">80%</span>
          </div>
        </div>
      </div>

      {/* annotation arrows */}
      <svg width="1602" height="1037" viewBox="0 0 1602 1037" className="absolute left-0 top-0 pointer-events-none drop-shadow-[1.500px_2px_1.500px_rgba(0,0,0,0.45)]">
        <polygon points="327,226 352,232 347,236 529,337 527,340 342,241 343,244" fill="#e8141a" />
        <polygon points="635,317 611,318 614,322 553,348 554,351.500 616,328 616,333" fill="#e8141a" />
      </svg>

      {/* cursor */}
      <svg width="16" height="16" viewBox="0 0 16 16" className="absolute left-[1064px] top-[437px]">
        <path d="M5.500 1h5v4.500H15v5h-4.500V15h-5v-4.500H1v-5h4.500z" fill="#fff" stroke="#000" strokeWidth="1.300" />
      </svg>

      {/* input method popup */}
      <div className="absolute left-[1342px] top-[992px] w-[62px] h-[28px] rounded-[6px] bg-white flex items-center justify-center gap-[5px] text-[12px] text-[#777]">
        <span>CH</span><span>♪</span><span>简</span>
      </div>

      {/* watermark */}
      <div className="absolute left-[1187px] top-[933px] w-[405px] h-[99px] bg-white/75 pointer-events-none">
        <div className="absolute left-[9px] top-[2px] text-[43px] leading-[50px] font-bold text-[#ff2b2b] whitespace-nowrap font-['Noto_Sans_CJK_SC',sans-serif]">电脑技术网</div>
        <div className="absolute left-[10px] top-[52px] text-[33.500px] leading-[38px] text-[#2b78e4] whitespace-nowrap font-['Liberation_Serif',serif]">www.tagxp.com</div>
        <div className="absolute left-[241px] top-0 w-[165px] h-[99px] rounded-[24px] bg-[#2e7fff] overflow-hidden flex items-center justify-center">
          <span className="text-[85px] leading-none font-bold text-[#f6f8fb] tracking-[-4px] font-['Open_Sans',sans-serif] mt-[-14px]">TAG</span>
          <span className="absolute left-[60px] top-[62px] text-[20px] leading-[22px] text-[#1c62c8]/40 whitespace-nowrap font-bold">极光下载站</span>
          <span className="absolute left-[56px] top-[82px] text-[15px] leading-[16px] text-[#1c62c8]/50 whitespace-nowrap">www.xz7.com</span>
        </div>
      </div>
    </div>
  );
}
